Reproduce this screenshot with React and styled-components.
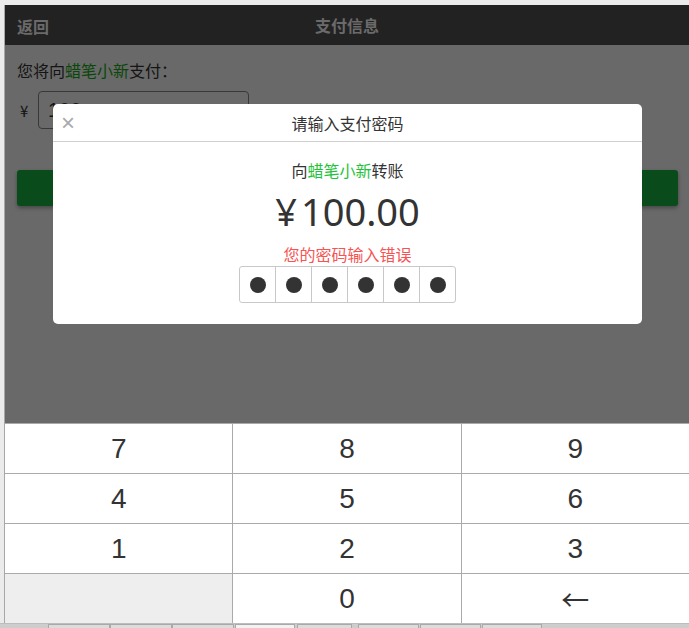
import React from 'react';
import styled, { createGlobalStyle } from 'styled-components';

const GlobalStyle = createGlobalStyle`
  html, body {
    margin: 0;
    padding: 0;
    height: 628px;
    overflow: hidden;
    background: #ebebeb;
    font-family: "Noto Sans CJK SC", "Noto Sans", sans-serif;
  }
`;

const keys = ['7', '8', '9', '4', '5', '6', '1', '2', '3', '', '0', '←'];
const tabs = [
  { x: 48, w: 60 },
  { x: 110, w: 60 },
  { x: 172, w: 60 },
  { x: 235, w: 58, active: true },
  { x: 297, w: 53 },
  { x: 358, w: 59 },
  { x: 420, w: 59 },
  { x: 482, w: 58 },
];

const App = () => {
  return (
    <>
      <GlobalStyle />
      <Screen>
        <Frame>
          <Header>
            <Back>返回</Back>
            <Title>支付信息</Title>
          </Header>
          <Body>
            <Prompt>
              您将向<Green>蜡笔小新</Green>支付：
            </Prompt>
            <AmountRow>
              <Yen>¥</Yen>
              <AmountInput>100</AmountInput>
            </AmountRow>
            <PayButton />
            <Overlay />
            <Modal>
              <ModalHead>
                <Close>×</Close>
                <ModalTitle>请输入支付密码</ModalTitle>
              </ModalHead>
              <ModalBody>
                <Payee>
                  向<Bright>蜡笔小新</Bright>转账
                </Payee>
                <Sum>
                  <SumYen>¥</SumYen>100.00
                </Sum>
                <Error>您的密码输入错误</Error>
                <Boxes>
                  {[0, 1, 2, 3, 4, 5].map((i) => (
                    <Box key={i} $first={i === 0}>
                      <Dot />
                    </Box>
                  ))}
                </Boxes>
              </ModalBody>
            </Modal>
          </Body>
          <Keypad>
            {keys.map((k, i) => (
              <Key key={i} $blank={k === ''} $arrow={k === '←'}>
                {k}
              </Key>
            ))}
          </Keypad>
        </Frame>
        <Taskbar>
          {tabs.map((t, i) => (
            <Tab key={i} $active={t.active} style={{ left: t.x, width: t.w }} />
          ))}
        </Taskbar>
      </Screen>
    </>
  );
};

export default App;

const Screen = styled.div`
  height: 628px;
  display: flex;
  flex-direction: column;
  padding-top: 5px;
  box-sizing: border-box;
`;

const Frame = styled.div`
  margin-left: 4px;
  border-left: 1px solid #a8a8a8;
  height: 618px;
  display: flex;
  flex-direction: column;
  background: #fff;
`;

const Header = styled.div`
  height: 40px;
  background: #222;
  position: relative;
  display: flex;
  align-items: center;
  justify-content: center;
  flex-shrink: 0;
`;

const Back = styled.span`
  position: absolute;
  left: 12px;
  top: 9px;
  font-size: 16px;
  font-weight: bold;
  color: #6a6a6a;
`;

const Title = styled.span`
  font-size: 16px;
  font-weight: bold;
  color: #6a6a6a;
`;

const Body = styled.div`
  position: relative;
  flex: 1;
  padding: 13px 11px 0 12px;
  box-sizing: border-box;
`;

const Prompt = styled.div`
  font-size: 16px;
  color: #333;
  line-height: 24px;
`;

const Green = styled.span`
  color: #1aad19;
`;

const AmountRow = styled.div`
  display: flex;
  align-items: center;
  margin-top: 9px;
`;

const Yen = styled.span`
  font-size: 15px;
  color: #333;
  width: 21px;
  padding-left: 3px;
  box-sizing: border-box;
`;

const AmountInput = styled.div`
  width: 211px;
  height: 38px;
  box-sizing: border-box;
  border: 1px solid #888;
  border-radius: 4px;
  font-family: "Liberation Sans", Arial, sans-serif;
  font-size: 20px;
  line-height: 36px;
  padding-left: 9px;
  color: #333;
`;

const PayButton = styled.div`
  margin-top: 41px;
  height: 36px;
  border-radius: 3px;
  background: #16b63f;
  box-shadow: 0 2px 4px rgba(0, 0, 0, 0.35);
`;

const Overlay = styled.div`
  position: absolute;
  inset: 0;
  background: rgba(0, 0, 0, 0.59);
`;

const Modal = styled.div`
  position: absolute;
  top: 59px;
  left: 48px;
  width: 589px;
  height: 220px;
  background: #fff;
  border-radius: 5px;
  overflow: hidden;
`;

const ModalHead = styled.div`
  position: relative;
  height: 37px;
  border-bottom: 1px solid #cfcfcf;
  display: flex;
  align-items: center;
  justify-content: center;
`;

const Close = styled.span`
  position: absolute;
  left: 8px;
  top: 7px;
  font-family: "Liberation Sans", Arial, sans-serif;
  font-size: 24px;
  line-height: 24px;
  color: #aaa;
`;

const ModalTitle = styled.span`
  font-size: 16px;
  color: #333;
`;

const ModalBody = styled.div`
  display: flex;
  flex-direction: column;
  align-items: center;
  padding-top: 17px;
`;

const Payee = styled.div`
  font-size: 16px;
  line-height: 22px;
  color: #333;
`;

const Bright = styled.span`
  color: #1fc33b;
`;

const Sum = styled.div`
  font-family: "Noto Sans", "Open Sans", sans-serif;
  font-size: 38px;
  line-height: 44px;
  color: #333;
  margin-top: 8px;
`;

const SumYen = styled.span`
  margin-right: 4px;
`;

const Error = styled.div`
  font-size: 16px;
  line-height: 22px;
  color: #f65353;
  margin-top: 10px;
`;

const Boxes = styled.div`
  display: flex;
  margin-top: 1px;
  border: 1px solid #c8c8c8;
  border-radius: 3px;
`;

const Box = styled.div`
  width: 35px;
  height: 35px;
  display: flex;
  align-items: center;
  justify-content: center;
  border-left: ${(p) => (p.$first ? 'none' : '1px solid #c8c8c8')};
`;

const Dot = styled.div`
  width: 16px;
  height: 16px;
  border-radius: 50%;
  background: #333;
`;

const Keypad = styled.div`
  display: grid;
  grid-template-columns: 1fr 1fr 1fr;
  grid-auto-rows: 49px;
  gap: 1px;
  background: #aaa;
  border-top: 1px solid #aaa;
  flex-shrink: 0;
`;

const Key = styled.div`
  background: ${(p) => (p.$blank ? '#eee' : '#fff')};
  display: flex;
  align-items: center;
  justify-content: center;
  font-family: ${(p) => (p.$arrow ? '"Noto Sans CJK SC", sans-serif' : '"Liberation Sans", Arial, sans-serif')};
  font-size: 28px;
  color: #333;
`;

const Taskbar = styled.div`
  position: relative;
  flex: 1;
  background: #cdcdcd;
  border-top: 1px solid #bdbdbd;
`;

const Tab = styled.div`
  position: absolute;
  top: 0;
  bottom: 0;
  background: ${(p) => (p.$active ? '#f2f2f2' : '#dcdcdc')};
  border: 1px solid #a9a9a9;
  border-bottom: none;
`;
